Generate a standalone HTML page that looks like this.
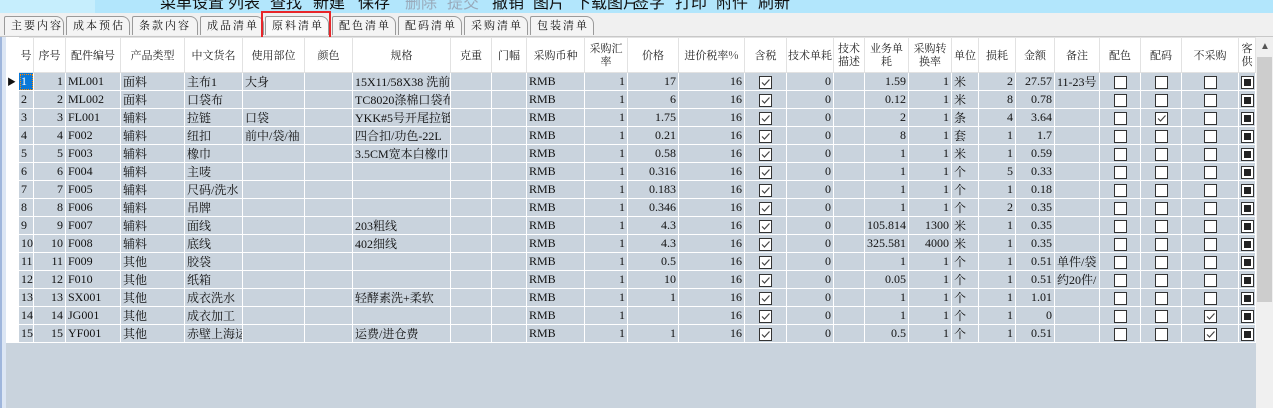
<!DOCTYPE html>
<html><head><meta charset="utf-8"><style>
*{margin:0;padding:0;box-sizing:border-box}
body{width:1273px;height:408px;overflow:hidden;background:#c9d3dd;position:relative;font-family:"Liberation Serif","Noto Serif CJK SC",serif;font-size:12px;color:#111}
#tb{position:absolute;left:0;top:0;width:1273px;height:13px;background:#b2e6fc;overflow:hidden}
#tb .l{position:absolute;left:0;top:0;width:95px;height:13px;background:#c6eefd}
#tb span{position:absolute;top:-11px;font-family:"Liberation Sans","Noto Sans CJK SC",sans-serif;font-size:16px;color:#111}
#tabs{position:absolute;left:0;top:13px;width:1273px;height:24px;background:#f0f0f0;border-bottom:1px solid #c8c8c8}
.tab{position:absolute;top:3px;height:19px;border:1px solid #9a9a9a;border-bottom:none;background:#f4f4f4;font-size:11px;line-height:17px;padding-left:6px;letter-spacing:2px;font-family:"Noto Serif CJK SC",serif;border-radius:2px 8px 0 0}
#red{position:absolute;left:261px;top:11px;width:70px;height:30px;border:2px solid #e8262a}
#edge{position:absolute;left:0;top:37px;width:6px;height:371px;background:#dce6f4;border-left:2px solid #9fb6dc}
table{position:absolute;left:6px;top:37px;width:1249px;border-collapse:collapse;table-layout:fixed}
td,th{border:1px solid #fff;height:18px;padding:0 2px;white-space:nowrap;overflow:hidden;font-weight:normal}
th{background:#fff;border-color:#e2e2e2;height:35px;font-family:"Noto Serif CJK SC",serif;font-size:11px;line-height:13px;white-space:normal;text-align:center;color:#222;padding:0 1px}
td{background:#c9d3dd}
td.r{text-align:right}
td.i{background:#fff;border-color:#fff}
td.s{background:#0a78d7;color:#fff;outline:1px dotted #f80;outline-offset:-2px}
.c{text-align:center;padding:0}
.b{display:inline-block;width:13px;height:13px;border:1px solid #333;background:#fff;vertical-align:middle;position:relative}
.b svg{position:absolute;left:0;top:0}
.k{display:inline-block;width:13px;height:13px;border:1px solid #333;background:#fff;vertical-align:middle;position:relative}
.k:after{content:"";position:absolute;left:2px;top:2px;width:7px;height:7px;background:#222}
#sb{position:absolute;left:1256px;top:37px;width:17px;height:371px;background:#f0f0f0;z-index:5}
#sb .th{position:absolute;left:1px;top:20px;width:15px;height:245px;background:#cdcdcd}
#sb .up{position:absolute;left:4px;top:4px;font-size:10px;color:#555;font-family:"Liberation Sans",sans-serif}
</style></head><body>
<svg width="0" height="0" style="position:absolute"><defs><symbol id="ck" viewBox="0 0 11 11"><path d="M2 5.5 L4.5 8 L9.5 2.5" fill="none" stroke="#444" stroke-width="1.2"/></symbol></defs></svg>
<div id="tb"><div class="l"></div>
<span style="left:160px">菜单设置</span><span style="left:228px">列表</span><span style="left:270px">查找</span><span style="left:313px">新建</span><span style="left:358px">保存</span><span style="left:405px;color:#9ab">删除</span><span style="left:447px;color:#9ab">提交</span><span style="left:492px">撤销</span><span style="left:533px">图片</span><span style="left:575px">下载图片</span><span style="left:633px">签字</span><span style="left:675px">打印</span><span style="left:716px">附件</span><span style="left:758px">刷新</span>
</div>
<div id="tabs">
<div class="tab" style="left:4px;width:60px">主要内容</div>
<div class="tab" style="left:66px;width:64px">成本预估</div>
<div class="tab" style="left:132px;width:66px">条款内容</div>
<div class="tab" style="left:200px;width:64px">成品清单</div>
<div class="tab" style="left:265px;width:64px;background:#fafafa">原料清单</div>
<div class="tab" style="left:332px;width:64px">配色清单</div>
<div class="tab" style="left:398px;width:64px">配码清单</div>
<div class="tab" style="left:464px;width:64px">采购清单</div>
<div class="tab" style="left:530px;width:64px">包装清单</div>
</div>
<div id="red"></div>
<div id="edge"></div>
<table>
<colgroup><col style="width:12px"><col style="width:15px"><col style="width:32px"><col style="width:55px"><col style="width:64px"><col style="width:58px"><col style="width:62px"><col style="width:48px"><col style="width:98px"><col style="width:41px"><col style="width:35px"><col style="width:58px"><col style="width:43px"><col style="width:51px"><col style="width:66px"><col style="width:42px"><col style="width:47px"><col style="width:31px"><col style="width:44px"><col style="width:43px"><col style="width:27px"><col style="width:37px"><col style="width:39px"><col style="width:45px"><col style="width:41px"><col style="width:41px"><col style="width:57px"><col style="width:17px"></colgroup>
<tr><th style="border-color:#fff"></th><th>号</th><th>序号</th><th>配件编号</th><th>产品类型</th><th>中文货名</th><th>使用部位</th><th>颜色</th><th>规格</th><th>克重</th><th>门幅</th><th>采购币种</th><th>采购汇率</th><th>价格</th><th>进价税率%</th><th>含税</th><th>技术单耗</th><th>技术描述</th><th>业务单耗</th><th>采购转换率</th><th>单位</th><th>损耗</th><th>金额</th><th>备注</th><th>配色</th><th>配码</th><th>不采购</th><th>客供</th></tr>
<tr><td class="i" style="font-size:9px;padding:0">▶</td><td class="s">1</td><td class="r">1</td><td>ML001</td><td>面料</td><td>主布1</td><td>大身</td><td></td><td>15X11/58X38 洗前</td><td></td><td></td><td>RMB</td><td class="r">1</td><td class="r">17</td><td class="r">16</td><td class="c"><span class="b"><svg width="11" height="11"><use href="#ck"/></svg></span></td><td class="r">0</td><td></td><td class="r">1.59</td><td class="r">1</td><td>米</td><td class="r">2</td><td class="r">27.57</td><td>11-23号</td><td class="c"><span class="b"></span></td><td class="c"><span class="b"></span></td><td class="c"><span class="b"></span></td><td class="c"><span class="k"></span></td></tr>
<tr><td class="i"></td><td>2</td><td class="r">2</td><td>ML002</td><td>面料</td><td>口袋布</td><td></td><td></td><td>TC8020涤棉口袋布</td><td></td><td></td><td>RMB</td><td class="r">1</td><td class="r">6</td><td class="r">16</td><td class="c"><span class="b"><svg width="11" height="11"><use href="#ck"/></svg></span></td><td class="r">0</td><td></td><td class="r">0.12</td><td class="r">1</td><td>米</td><td class="r">8</td><td class="r">0.78</td><td></td><td class="c"><span class="b"></span></td><td class="c"><span class="b"></span></td><td class="c"><span class="b"></span></td><td class="c"><span class="k"></span></td></tr>
<tr><td class="i"></td><td>3</td><td class="r">3</td><td>FL001</td><td>辅料</td><td>拉链</td><td>口袋</td><td></td><td>YKK#5号开尾拉链</td><td></td><td></td><td>RMB</td><td class="r">1</td><td class="r">1.75</td><td class="r">16</td><td class="c"><span class="b"><svg width="11" height="11"><use href="#ck"/></svg></span></td><td class="r">0</td><td></td><td class="r">2</td><td class="r">1</td><td>条</td><td class="r">4</td><td class="r">3.64</td><td></td><td class="c"><span class="b"></span></td><td class="c"><span class="b"><svg width="11" height="11"><use href="#ck"/></svg></span></td><td class="c"><span class="b"></span></td><td class="c"><span class="k"></span></td></tr>
<tr><td class="i"></td><td>4</td><td class="r">4</td><td>F002</td><td>辅料</td><td>纽扣</td><td>前中/袋/袖</td><td></td><td>四合扣/功色-22L</td><td></td><td></td><td>RMB</td><td class="r">1</td><td class="r">0.21</td><td class="r">16</td><td class="c"><span class="b"><svg width="11" height="11"><use href="#ck"/></svg></span></td><td class="r">0</td><td></td><td class="r">8</td><td class="r">1</td><td>套</td><td class="r">1</td><td class="r">1.7</td><td></td><td class="c"><span class="b"></span></td><td class="c"><span class="b"></span></td><td class="c"><span class="b"></span></td><td class="c"><span class="k"></span></td></tr>
<tr><td class="i"></td><td>5</td><td class="r">5</td><td>F003</td><td>辅料</td><td>橡巾</td><td></td><td></td><td>3.5CM宽本白橡巾</td><td></td><td></td><td>RMB</td><td class="r">1</td><td class="r">0.58</td><td class="r">16</td><td class="c"><span class="b"><svg width="11" height="11"><use href="#ck"/></svg></span></td><td class="r">0</td><td></td><td class="r">1</td><td class="r">1</td><td>米</td><td class="r">1</td><td class="r">0.59</td><td></td><td class="c"><span class="b"></span></td><td class="c"><span class="b"></span></td><td class="c"><span class="b"></span></td><td class="c"><span class="k"></span></td></tr>
<tr><td class="i"></td><td>6</td><td class="r">6</td><td>F004</td><td>辅料</td><td>主唛</td><td></td><td></td><td></td><td></td><td></td><td>RMB</td><td class="r">1</td><td class="r">0.316</td><td class="r">16</td><td class="c"><span class="b"><svg width="11" height="11"><use href="#ck"/></svg></span></td><td class="r">0</td><td></td><td class="r">1</td><td class="r">1</td><td>个</td><td class="r">5</td><td class="r">0.33</td><td></td><td class="c"><span class="b"></span></td><td class="c"><span class="b"></span></td><td class="c"><span class="b"></span></td><td class="c"><span class="k"></span></td></tr>
<tr><td class="i"></td><td>7</td><td class="r">7</td><td>F005</td><td>辅料</td><td>尺码/洗水</td><td></td><td></td><td></td><td></td><td></td><td>RMB</td><td class="r">1</td><td class="r">0.183</td><td class="r">16</td><td class="c"><span class="b"><svg width="11" height="11"><use href="#ck"/></svg></span></td><td class="r">0</td><td></td><td class="r">1</td><td class="r">1</td><td>个</td><td class="r">1</td><td class="r">0.18</td><td></td><td class="c"><span class="b"></span></td><td class="c"><span class="b"></span></td><td class="c"><span class="b"></span></td><td class="c"><span class="k"></span></td></tr>
<tr><td class="i"></td><td>8</td><td class="r">8</td><td>F006</td><td>辅料</td><td>吊牌</td><td></td><td></td><td></td><td></td><td></td><td>RMB</td><td class="r">1</td><td class="r">0.346</td><td class="r">16</td><td class="c"><span class="b"><svg width="11" height="11"><use href="#ck"/></svg></span></td><td class="r">0</td><td></td><td class="r">1</td><td class="r">1</td><td>个</td><td class="r">2</td><td class="r">0.35</td><td></td><td class="c"><span class="b"></span></td><td class="c"><span class="b"></span></td><td class="c"><span class="b"></span></td><td class="c"><span class="k"></span></td></tr>
<tr><td class="i"></td><td>9</td><td class="r">9</td><td>F007</td><td>辅料</td><td>面线</td><td></td><td></td><td>203粗线</td><td></td><td></td><td>RMB</td><td class="r">1</td><td class="r">4.3</td><td class="r">16</td><td class="c"><span class="b"><svg width="11" height="11"><use href="#ck"/></svg></span></td><td class="r">0</td><td></td><td class="r">105.814</td><td class="r">1300</td><td>米</td><td class="r">1</td><td class="r">0.35</td><td></td><td class="c"><span class="b"></span></td><td class="c"><span class="b"></span></td><td class="c"><span class="b"></span></td><td class="c"><span class="k"></span></td></tr>
<tr><td class="i"></td><td>10</td><td class="r">10</td><td>F008</td><td>辅料</td><td>底线</td><td></td><td></td><td>402细线</td><td></td><td></td><td>RMB</td><td class="r">1</td><td class="r">4.3</td><td class="r">16</td><td class="c"><span class="b"><svg width="11" height="11"><use href="#ck"/></svg></span></td><td class="r">0</td><td></td><td class="r">325.581</td><td class="r">4000</td><td>米</td><td class="r">1</td><td class="r">0.35</td><td></td><td class="c"><span class="b"></span></td><td class="c"><span class="b"></span></td><td class="c"><span class="b"></span></td><td class="c"><span class="k"></span></td></tr>
<tr><td class="i"></td><td>11</td><td class="r">11</td><td>F009</td><td>其他</td><td>胶袋</td><td></td><td></td><td></td><td></td><td></td><td>RMB</td><td class="r">1</td><td class="r">0.5</td><td class="r">16</td><td class="c"><span class="b"><svg width="11" height="11"><use href="#ck"/></svg></span></td><td class="r">0</td><td></td><td class="r">1</td><td class="r">1</td><td>个</td><td class="r">1</td><td class="r">0.51</td><td>单件/袋</td><td class="c"><span class="b"></span></td><td class="c"><span class="b"></span></td><td class="c"><span class="b"></span></td><td class="c"><span class="k"></span></td></tr>
<tr><td class="i"></td><td>12</td><td class="r">12</td><td>F010</td><td>其他</td><td>纸箱</td><td></td><td></td><td></td><td></td><td></td><td>RMB</td><td class="r">1</td><td class="r">10</td><td class="r">16</td><td class="c"><span class="b"><svg width="11" height="11"><use href="#ck"/></svg></span></td><td class="r">0</td><td></td><td class="r">0.05</td><td class="r">1</td><td>个</td><td class="r">1</td><td class="r">0.51</td><td>约20件/</td><td class="c"><span class="b"></span></td><td class="c"><span class="b"></span></td><td class="c"><span class="b"></span></td><td class="c"><span class="k"></span></td></tr>
<tr><td class="i"></td><td>13</td><td class="r">13</td><td>SX001</td><td>其他</td><td>成衣洗水</td><td></td><td></td><td>轻酵素洗+柔软</td><td></td><td></td><td>RMB</td><td class="r">1</td><td class="r">1</td><td class="r">16</td><td class="c"><span class="b"><svg width="11" height="11"><use href="#ck"/></svg></span></td><td class="r">0</td><td></td><td class="r">1</td><td class="r">1</td><td>个</td><td class="r">1</td><td class="r">1.01</td><td></td><td class="c"><span class="b"></span></td><td class="c"><span class="b"></span></td><td class="c"><span class="b"></span></td><td class="c"><span class="k"></span></td></tr>
<tr><td class="i"></td><td>14</td><td class="r">14</td><td>JG001</td><td>其他</td><td>成衣加工</td><td></td><td></td><td></td><td></td><td></td><td>RMB</td><td class="r">1</td><td class="r"></td><td class="r">16</td><td class="c"><span class="b"><svg width="11" height="11"><use href="#ck"/></svg></span></td><td class="r">0</td><td></td><td class="r">1</td><td class="r">1</td><td>个</td><td class="r">1</td><td class="r">0</td><td></td><td class="c"><span class="b"></span></td><td class="c"><span class="b"></span></td><td class="c"><span class="b"><svg width="11" height="11"><use href="#ck"/></svg></span></td><td class="c"><span class="k"></span></td></tr>
<tr><td class="i"></td><td>15</td><td class="r">15</td><td>YF001</td><td>其他</td><td>赤壁上海运</td><td></td><td></td><td>运费/进仓费</td><td></td><td></td><td>RMB</td><td class="r">1</td><td class="r">1</td><td class="r">16</td><td class="c"><span class="b"><svg width="11" height="11"><use href="#ck"/></svg></span></td><td class="r">0</td><td></td><td class="r">0.5</td><td class="r">1</td><td>个</td><td class="r">1</td><td class="r">0.51</td><td></td><td class="c"><span class="b"></span></td><td class="c"><span class="b"></span></td><td class="c"><span class="b"><svg width="11" height="11"><use href="#ck"/></svg></span></td><td class="c"><span class="k"></span></td></tr>
</table>
<div id="sb"><div class="up">▲</div><div class="th"></div></div>
</body></html>
